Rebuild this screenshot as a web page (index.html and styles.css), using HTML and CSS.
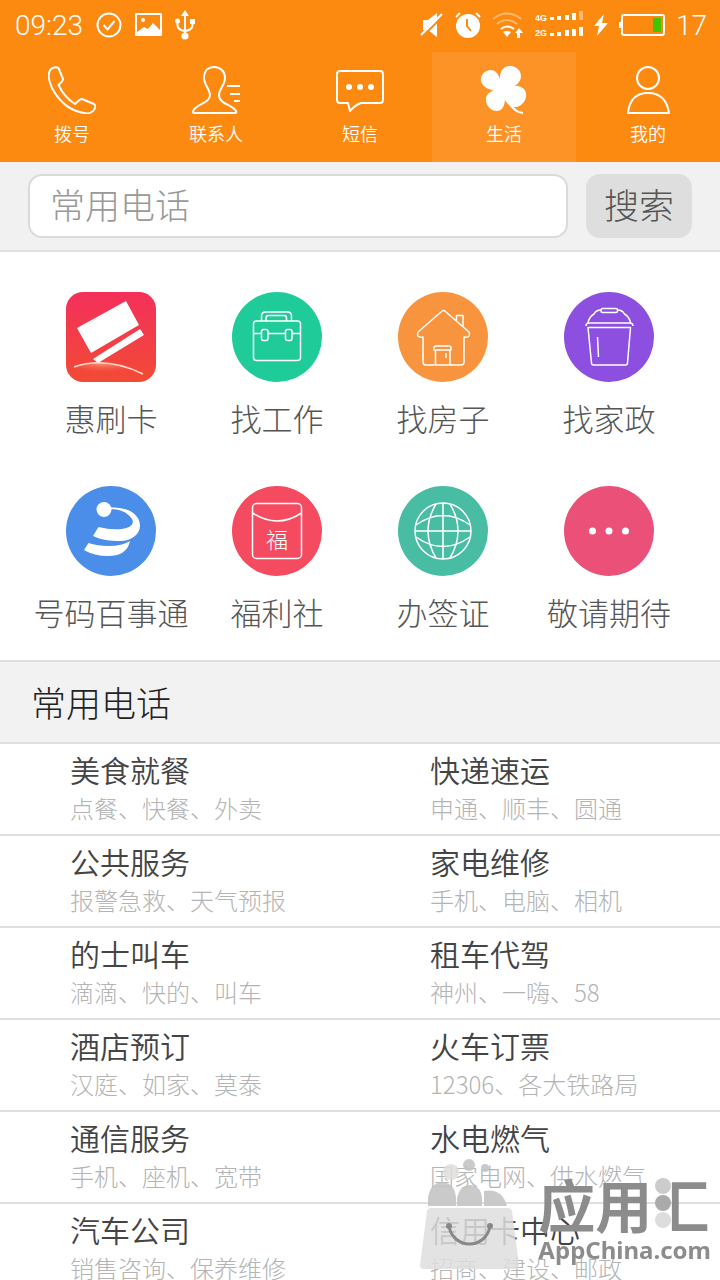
FILE: index.html
```html
<!DOCTYPE html>
<html lang="zh-CN">
<head>
<meta charset="utf-8">
<meta name="viewport" content="width=device-width, initial-scale=1">
<title>生活</title>
<link rel="stylesheet" href="styles.css">
</head>
<body>
<header class="top">
  <div class="status">
    <span class="clock">09:23</span>
    <svg class="line" width="26" height="26" viewBox="0 0 26 26"><circle cx="13" cy="13" r="11.5"/><path d="M7.500 13l4 4.500 7-8.500"/></svg>
    <svg width="27" height="24" viewBox="0 0 27 24"><rect class="line" x="1" y="1" width="25" height="21" /><circle class="solid" cx="8" cy="7" r="2"/><path class="solid" d="M2 21v-2l7-5 4 2 5-6 8 8v3z"/></svg>
    <svg width="20" height="30" viewBox="0 0 20 30"><path class="line" d="M10 4v22M2.500 11v4q0 5 7.500 6 7.500-1 7.500-6v-4"/><path class="solid" d="M10 0l4 6H6z"/><circle class="solid" cx="10" cy="26" r="3.500"/><circle class="solid" cx="2.500" cy="11" r="2.500"/><rect class="solid" x="15" y="9" width="5" height="5"/></svg>
    <span class="status-right">
      <svg width="24" height="26" viewBox="0 0 24 26"><path class="solid" d="M3 8h5l9-7v24l-9-7H3z"/><path class="slash" d="M2 25L24 3"/><path class="line" d="M1 23L22 2"/></svg>
      <svg width="26" height="26" viewBox="0 0 26 26"><circle class="solid" cx="13" cy="14" r="12"/><path class="line" d="M1 5l4-4M25 5l-4-4"/><path class="hands" d="M12 7v7l4 5"/></svg>
      <svg width="32" height="26" viewBox="0 0 32 26"><path class="line dim" d="M1 7Q15-4 29 7M5 12q10-8 20 0"/><path class="line" d="M9 17q6-5 13 0"/><path class="solid" d="M11 20q4-2 8 0l-4 5zM27 16l4 5h-3v5h-3v-5h-2z"/></svg>
      <svg width="48" height="28" viewBox="0 0 48 28"><text class="net" x="0" y="10">4G</text><text class="net" x="0" y="25">2G</text><path class="solid" d="M15 6h4v3h-4zM22 5h4v4h-4zM30 4h4v5h-4zM37 2h4v7h-4zM15 22h4v3h-4zM22 21h4v4h-4zM30 19h4v6h-4zM37 18h4v7h-4zM44 16h4v9h-4z"/><path class="solid dim" d="M44 0h4v9h-4z"/></svg>
      <svg width="14" height="22" viewBox="0 0 14 22"><path class="solid" d="M10 0L0 12h5L3 22l11-13H8z"/></svg>
      <svg width="46" height="24" viewBox="0 0 46 24"><rect class="line" x="3" y="2" width="42" height="20" rx="2"/><path class="solid" d="M0 9h3v6H0z"/><path class="charge" d="M34 5h8v14h-8z"/></svg>
      <span class="level">17</span>
    </span>
  </div>
  <nav class="tabs">
    <a class="tab" href="#dial"><svg class="line" width="48" height="48" viewBox="0 0 48 48"><path d="M3 3Q7 0 10.500 2L15 13q0 2-4.500 6Q16 31 27 38q5-5 7-5l12 5q2 2 1 4-2 5-8 5.500Q16 45 4 22-2 8 3 3z"/></svg>拨号</a>
    <a class="tab" href="#contacts"><svg class="line" width="48" height="48" viewBox="0 0 48 48"><path d="M22 1c-7 0-10 5-10 11 0 7 6 11 6 17 0 9-16 9-17 17q0 1 2 1h40q2 0 1-2c-3-6-17-7-17-16 0-6 6-10 6-17C33 6 29 1 22 1zM35 20h13M38 28h10M42 35h6"/></svg>联系人</a>
    <a class="tab" href="#sms"><svg class="line" width="48" height="48" viewBox="0 0 48 48"><path d="M4 5h40q3 0 3 3v26q0 3-3 3H25q-6 2-11 8-1-4-2-8H4q-3 0-3-3V8q0-3 3-3z"/><g class="solid"><circle cx="13" cy="21" r="3"/><circle cx="24" cy="21" r="3"/><circle cx="35" cy="21" r="3"/></g></svg>短信</a>
    <a class="tab active" href="#life" aria-current="page"><svg width="48" height="48" viewBox="0 0 48 48"><g class="solid"><path d="M22 25C14 26 2 22 1 15 0 9 5 4 11 4c7 0 10 9 11 21z"/><path d="M22 25C18 14 19 2 28 0c7-1 13 4 13 10 0 9-10 12-19 15z"/><path d="M23 21C14 23 5 27 6 34c0 6 5 11 11 11 8 0 10-12 6-24z"/><path d="M21 22c7-3 18-4 23 1 4 5 2 12-2 15-4 4-9 4-13 1-5-4-6-11-8-17z"/></g><path class="line" d="M24 26Q31 46 43 47"/></svg>生活</a>
    <a class="tab" href="#me"><svg class="line" width="48" height="48" viewBox="0 0 48 48"><circle cx="24" cy="12" r="11"/><path d="M4 47Q6 27 24 27T45 47z"/></svg>我的</a>
  </nav>
</header>

<main class="content">
  <form class="search">
    <input class="search-box" type="search" placeholder="常用电话" aria-label="常用电话">
    <button class="search-btn" type="button">搜索</button>
  </form>

  <div class="apps">
    <a class="app" href="#card"><svg width="90" height="90" viewBox="0 0 90 90"><defs><linearGradient id="red" x1="0" y1="0" x2="0" y2="1"><stop offset="0" stop-color="#f4305a"/><stop offset="1" stop-color="#f24a36"/></linearGradient><radialGradient id="glow" cx=".42" cy="0" r=".6"><stop offset="0" stop-color="#ff9a78"/><stop offset="1" stop-color="#f24a36" stop-opacity="0"/></radialGradient></defs><rect width="90" height="90" rx="17" fill="url(#red)"/><path fill="url(#glow)" d="M6 75Q40 64 80 83L70 88H20z"/><path fill="none" stroke="#ffd9cc" stroke-width="1.500" d="M8 75Q40 64 77 82"/><path class="solid" d="M11 36L60 9l13 24-48 28zM27 67l47-30 4 6-46 28z"/></svg>惠刷卡</a>
    <a class="app" href="#jobs"><svg class="glyph" width="90" height="90" viewBox="0 0 90 90"><circle class="disc green" cx="45" cy="45" r="45"/><rect x="21.500" y="29" width="47" height="39.500" rx="3"/><path d="M29.500 29v-5q0-4 4-4h22q4 0 4 4v5M34 29v-3q0-2.500 2.500-2.500h15.500q2.500 0 2.500 2.500v3M22 41.500h7.500M36 41.500h17.500M60 41.500h8"/><rect x="29.500" y="37.500" width="6.500" height="11" rx="2"/><rect x="53.500" y="37.500" width="6.500" height="11" rx="2"/></svg>找工作</a>
    <a class="app" href="#house"><svg class="glyph" width="90" height="90" viewBox="0 0 90 90"><circle class="disc orange" cx="45" cy="45" r="45"/><path d="M36.500 73H28q-3 0-3-3V45q-3 1-5-1-1-2 0-4l23-20q2.500-3 5 0l23 20q1 2 0 4-2 2-5 1v25q0 3-3 3H37.500V58M58.500 28.500v-5h6.500v12M38 54h13q2 0 2 2v2H36v-2q0-2 2-2zM52 58v15M48 61v5"/></svg>找房子</a>
    <a class="app" href="#home"><svg class="glyph" width="90" height="90" viewBox="0 0 90 90"><circle class="disc purple" cx="45" cy="45" r="45"/><path d="M22 34q0-3 3-3h41q3 0 3 3M24 35.500h42.500L63.500 71q0 2-2 2H29.500q-2 0-2-2zM24 31q1-6 6-9 2-4 7-4M53.500 18q5 0 7 4 5 3 6 9M33.500 45l1 20"/><rect x="37" y="16.500" width="16.500" height="4" rx="1.500"/></svg>找家政</a>
    <a class="app" href="#118114"><svg width="90" height="90" viewBox="0 0 90 90"><circle class="blue" cx="45" cy="45" r="45"/><g class="solid"><circle cx="38" cy="23.500" r="7.500"/><path d="M44 21.500c18-1 30 7 30 18C74 49 65 55 54 55c-10 0-19-1-27-5l5.500-9q12 3 23 2c11-1 14-7 9-12-4-5-11-8-20.500-8z"/><path d="M64 55C62 66 53 70 42 70c-9 0-17-2-24-6l4.500-7q9 3 20 3 14 0 21.500-5z"/></g></svg>号码百事通</a>
    <a class="app" href="#welfare"><svg class="glyph" width="90" height="90" viewBox="0 0 90 90"><circle class="disc coral" cx="45" cy="45" r="45"/><rect x="20.500" y="17.500" width="49" height="55" rx="4"/><path d="M20.500 27Q45 43 69.500 27"/><text class="luck" x="45" y="62">福</text></svg>福利社</a>
    <a class="app" href="#visa"><svg class="glyph" width="90" height="90" viewBox="0 0 90 90"><circle class="disc teal" cx="45" cy="45" r="45"/><circle cx="45" cy="45" r="28"/><path d="M45 17v56M17 45h56M38 18Q22 45 38 72M52 18Q68 45 52 72M18 39Q45 20 72 39M18 51Q45 70 72 51"/></svg>办签证</a>
    <a class="app" href="#more"><svg width="90" height="90" viewBox="0 0 90 90"><circle class="pink" cx="45" cy="45" r="45"/><g class="solid"><circle cx="28.500" cy="45" r="3.500"/><circle cx="45" cy="45" r="3.500"/><circle cx="61.500" cy="45" r="3.500"/></g></svg>敬请期待</a>
  </div>

  <h2 class="section">常用电话</h2>
  <div class="list">
    <a class="item" href="#1"><span class="name">美食就餐</span><span class="note">点餐、快餐、外卖</span></a>
    <a class="item" href="#2"><span class="name">快递速运</span><span class="note">申通、顺丰、圆通</span></a>
    <a class="item" href="#3"><span class="name">公共服务</span><span class="note">报警急救、天气预报</span></a>
    <a class="item" href="#4"><span class="name">家电维修</span><span class="note">手机、电脑、相机</span></a>
    <a class="item" href="#5"><span class="name">的士叫车</span><span class="note">滴滴、快的、叫车</span></a>
    <a class="item" href="#6"><span class="name">租车代驾</span><span class="note">神州、一嗨、58</span></a>
    <a class="item" href="#7"><span class="name">酒店预订</span><span class="note">汉庭、如家、莫泰</span></a>
    <a class="item" href="#8"><span class="name">火车订票</span><span class="note">12306、各大铁路局</span></a>
    <a class="item" href="#9"><span class="name">通信服务</span><span class="note">手机、座机、宽带</span></a>
    <a class="item" href="#10"><span class="name">水电燃气</span><span class="note">国家电网、供水燃气</span></a>
    <a class="item" href="#11"><span class="name">汽车公司</span><span class="note">销售咨询、保养维修</span></a>
    <a class="item" href="#12"><span class="name">信用卡中心</span><span class="note">招商、建设、邮政</span></a>
  </div>
</main>

<div class="mark">
  <svg width="104" height="120" viewBox="0 0 104 120"><path class="bag" d="M13 53h77q3 0 4 3l7 54q0 4-4 4H6q-4 0-4-4l7-54q1-3 4-3z"/><path class="bump" d="M10 51v-8q2-15 14-16 13 1 14 16v8zM39 51v-8q3-13 13-13 11 1 12 13v8zM66 51V36q18-3 23 15z"/><circle class="bag" cx="33" cy="17" r="8"/><circle class="bump" cx="51" cy="10" r="6"/><circle class="bump" cx="67" cy="13" r="4"/><path class="smile" d="M31 71c4 24 37 24 41 0"/><circle class="eye" cx="31" cy="71" r="3"/><circle class="eye" cx="72" cy="71" r="3"/></svg>
  <div class="brand">
    <div class="brand-cn">应用<span class="hui">汇</span><svg class="drops" width="16" height="50" viewBox="0 0 16 50"><circle class="d1" cx="8" cy="8" r="8"/><circle class="d2" cx="8" cy="25" r="8"/><circle class="d3" cx="8" cy="42" r="8"/></svg></div>
    <div class="brand-en">AppChina.com</div>
  </div>
</div>
</body>
</html>
```
FILE: styles.css
```css
* { box-sizing: border-box; }

body {
  margin: 0;
  height: 100vh;
  display: flex;
  flex-direction: column;
  overflow: hidden;
  background: #fff;
  color: #555;
  font-family: "Noto Sans CJK SC", "Noto Sans", sans-serif;
  font-weight: 300;
}

a { color: inherit; text-decoration: none; }
svg { flex: none; display: block; }

.solid { fill: #fff; stroke: none; }
.line { fill: none; stroke: #fff; stroke-width: 2; stroke-linejoin: round; }
.dim { opacity: 0.4; }

/* status bar and tabs */
.top { flex: none; background: #fd8a10; color: #fff; }
.status {
  display: flex;
  align-items: center;
  gap: 13px;
  height: 52px;
  padding: 0 13px 2px 15px;
  font-family: Roboto, sans-serif;
  font-size: 28px;
}
.status-right { display: flex; align-items: center; gap: 11px; margin-left: auto; }
.slash { stroke: #fd8a10; stroke-width: 2; }
.hands { fill: none; stroke: #fd8a10; stroke-width: 2; }
.charge { fill: #3fc600; }
.net { fill: #fff; font: bold 9px "Liberation Sans", sans-serif; }

.tabs { display: flex; }
.tab {
  flex: 1;
  display: flex;
  flex-direction: column;
  align-items: center;
  gap: 7px;
  height: 110px;
  padding-top: 14px;
  font-size: 18px;
  line-height: 24px;
  font-weight: 350;
}
.tab.active { background: #fd9226; }

/* scrolling page */
.content { flex: 1; min-height: 0; overflow-y: auto; scrollbar-width: none; }

.search {
  display: flex;
  gap: 18px;
  padding: 12px 28px;
  background: #f1f1f1;
  border-bottom: 2px solid #dfdfdf;
}
.search-box {
  flex: 1;
  min-width: 0;
  height: 64px;
  padding: 0 20px 6px;
  border: 2px solid #dadada;
  border-radius: 14px;
  background: #fff;
  color: #555;
  font: inherit;
  font-size: 35px;
}
.search-box::placeholder { color: #999; opacity: 1; }
.search-btn {
  width: 106px;
  padding: 0 0 6px;
  border: 0;
  border-radius: 14px;
  background: #dedede;
  color: #555;
  font: inherit;
  font-size: 35px;
}

.apps {
  display: grid;
  grid-template-columns: repeat(4, 1fr);
  row-gap: 48px;
  padding: 40px 28px 28px;
}
.app {
  display: flex;
  flex-direction: column;
  align-items: center;
  gap: 16px;
  font-size: 31px;
  line-height: 40px;
  white-space: nowrap;
}
.glyph { fill: none; stroke: #fff; stroke-width: 1.5; stroke-linejoin: round; }
.disc { stroke: none; }
.green { fill: #1fcb98; }
.orange { fill: #f8943d; }
.purple { fill: #8c4fdf; }
.blue { fill: #4b8eea; }
.coral { fill: #f54b60; }
.teal { fill: #48bda3; }
.pink { fill: #ea5078; }
.luck { fill: #fff; stroke: none; font-size: 22px; text-anchor: middle; }

.section {
  margin: 0;
  padding: 0 31px;
  border: solid #dfdfdf;
  border-width: 2px 0;
  background: #f2f2f2;
  color: #222;
  font-size: 35px;
  font-weight: 300;
  line-height: 80px;
}

.list { display: grid; grid-template-columns: 1fr 1fr; }
.item {
  display: flex;
  flex-direction: column;
  gap: 4px;
  padding: 6px 0 10px 70px;
  border-bottom: 2px solid #dfdfdf;
  white-space: nowrap;
}
.name { color: #444; font-size: 30px; font-weight: 350; line-height: 38px; }
.note { color: #b4b4b4; font-size: 24px; line-height: 32px; }

/* store mark over the bottom right corner */
.mark {
  position: fixed;
  right: 9px;
  bottom: 5px;
  display: flex;
  align-items: flex-end;
  gap: 16px;
  pointer-events: none;
}
.bag { fill: #dedede; opacity: 0.85; }
.bump { fill: #c4c4c4; opacity: 0.9; }
.smile { fill: none; stroke: #888; stroke-width: 3; }
.eye { fill: #888; }
.brand { color: #8c8c8c; padding-bottom: 10px; }
.brand-cn { position: relative; margin-bottom: 2px; font-size: 57px; font-weight: 700; line-height: 60px; }
.hui { display: inline-block; clip-path: inset(0 0 0 34%); }
.drops { position: absolute; right: 40px; top: 5px; }
.d1 { fill: #ccc; }
.d2 { fill: #aaa; }
.d3 { fill: #ddd; }
.brand-en { font-family: "Noto Sans", sans-serif; font-size: 24px; font-weight: 700; line-height: 30px; }
```
